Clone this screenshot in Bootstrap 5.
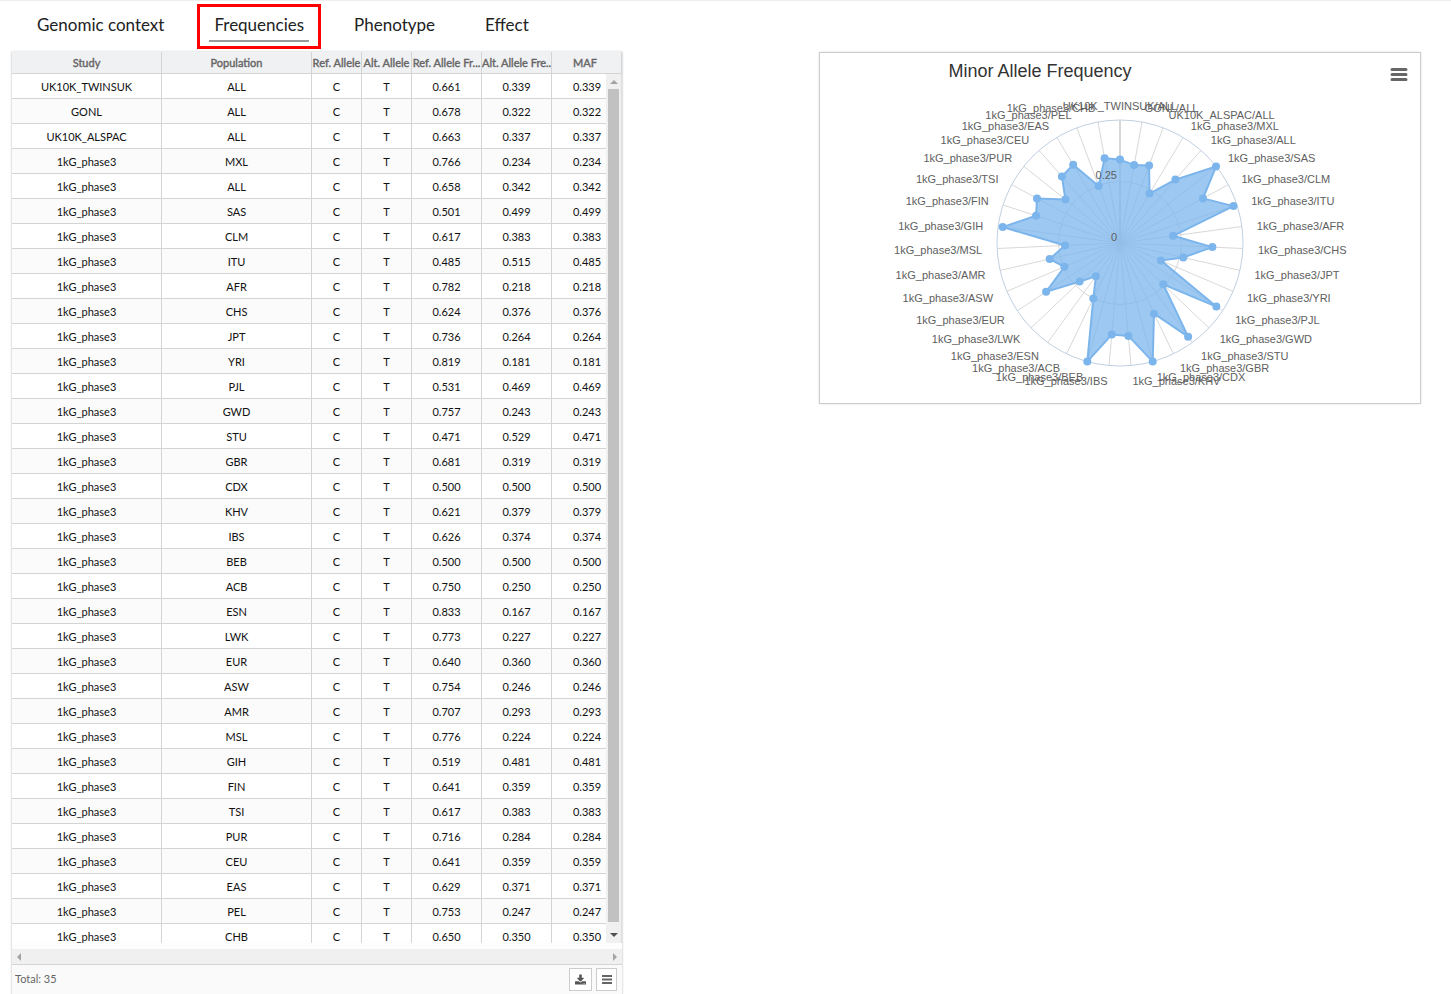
<!DOCTYPE html>
<html lang="en">
<head>
<meta charset="utf-8">
<meta name="viewport" content="width=device-width, initial-scale=1">
<title>Variant frequencies</title>
<link href="https://cdn.jsdelivr.net/npm/bootstrap@5.3.0/dist/css/bootstrap.min.css" rel="stylesheet">
<style>
  body { font-family: Lato, sans-serif; color: #222; background: #fff; }
  .page { border-top: 1px solid #eee; }
  .tab-bar { padding: 3px 0 2px 20px; gap: 16px; }
  .tab-item { border: 3px solid transparent; }
  .tab-item.active { border-color: #f00; }
  .tab-item a { display: block; margin: 0 9px 4px; padding: 4px 5px 2px; font-size: 17px; line-height: 27px; color: #222; text-decoration: none; border-bottom: 2px solid transparent; }
  .tab-item.active a { border-color: #999; }
  .panels { padding: 0 30px 0 11px; gap: 24px; min-height: 0; }
  .grid-box { flex: 0 1 612px; background: #fdfdfd; border: 1px solid #e6e6e6; border-top-color: #eee; border-bottom: 0; border-radius: 2px 2px 0 0; box-shadow: 0 0 2px #e4e4e4; overflow: hidden; }
  .grid-table { table-layout: fixed; width: 100%; border-collapse: separate; border-spacing: 0; text-align: center; white-space: nowrap; }
  .grid-table .c-name { width: 150px; }
  .grid-table .c-allele { width: 50px; }
  .grid-table .c-freq { width: 70px; }
  .grid-table th { height: 22px; padding: 0; font-size: 11px; line-height: 21px; font-weight: 400; -webkit-text-stroke: .4px #666; color: #666; background: #f0f1f3; border-right: 1px solid #d4d4d4; border-bottom: 1px solid #d4d4d4; overflow: hidden; }
  .grid-table td { height: 25px; padding: 2px 0 0; font-size: 11px; line-height: 22px; color: #111; background: #fff; border-right: 1px solid #d4d4d4; border-bottom: 1px solid #d4d4d4; }
  .grid-table tr:nth-child(even) td { background: #fbfbfb; }
  .grid-table td:last-child { border-right: 0; }
  .grid-table th:last-child { padding-right: 3px; }
  .v-bar { width: 16px; top: 22px; bottom: 0; right: 0; background: #f0f0f0; border-right: 1px solid #ddd; }
  .v-bar .thumb { flex: 1; width: 11px; background: #c1c1c1; }
  .v-bar svg { height: 15px; width: 14px; }
  .v-bar svg:last-child { height: 21px; }
  .h-bar { height: 16px; margin-top: 6px; background: #f0f0f0; border-bottom: 1px solid #d4d4d4; }
  .grid-foot { height: 29px; padding: 0 5px 0 3px; background: #fafafa; color: #666; font-size: 11px; gap: 4px; }
  .tool { width: 23px; height: 23px; padding: 0; background: #fff; border: 1px solid #ccc; color: #555; display: flex; align-items: center; justify-content: center; }
  .tool + .tool { width: 21px; }
  .chart-box { flex: 0 1 602px; margin-top: 1px; border: 1px solid #ccc; box-shadow: 0 0 2px #ddd; background: #fff; }
  .chart-box svg.plot { display: block; width: 100%; font-family: "Liberation Sans", Arial, sans-serif; font-size: 11px; fill: #606060; }
  .menu-btn { position: absolute; top: 10px; right: 9px; width: 24px; height: 22px; padding: 0; border: 0; background: none; }
  .menu-btn svg { display: block; }
</style>
</head>
<body>
<div class="page vh-100 d-flex flex-column overflow-hidden">
  <nav class="tab-bar d-flex" aria-label="Variant sections">
    <div class="tab-item"><a href="#context">Genomic context</a></div>
    <div class="tab-item active"><a href="#frequencies" aria-current="page">Frequencies</a></div>
    <div class="tab-item"><a href="#phenotype">Phenotype</a></div>
    <div class="tab-item"><a href="#effect">Effect</a></div>
  </nav>
  <main class="panels d-flex justify-content-between align-items-start flex-grow-1">
    <section class="grid-box d-flex flex-column h-100">
      <div class="position-relative flex-grow-1 overflow-hidden">
        <table class="grid-table">
          <colgroup><col class="c-name"><col class="c-name"><col class="c-allele"><col class="c-allele"><col class="c-freq"><col class="c-freq"><col></colgroup>
          <thead><tr><th>Study</th><th>Population</th><th>Ref. Allele</th><th>Alt. Allele</th><th>Ref. Allele Fr...</th><th>Alt. Allele Fre..</th><th>MAF</th></tr></thead>
          <tbody id="rows"></tbody>
        </table>
        <div class="v-bar position-absolute d-flex flex-column align-items-center" aria-hidden="true">
          <svg viewBox="0 0 14 15"><path d="M3 10L7 6l4 4z" fill="#a3a3a3"/></svg>
          <div class="thumb"></div>
          <svg viewBox="0 0 14 21"><path d="M3 11h8l-4 4z" fill="#505050"/></svg>
        </div>
      </div>
      <div class="h-bar d-flex justify-content-between align-items-center px-1" aria-hidden="true">
        <svg width="6" height="8"><path d="M5 0v8L1 4z" fill="#a3a3a3"/></svg>
        <svg width="6" height="8"><path d="M1 0v8l4-4z" fill="#a3a3a3"/></svg>
      </div>
      <div class="grid-foot d-flex align-items-center">
        <span class="me-auto">Total: 35</span>
        <button class="tool" type="button" aria-label="Download"><svg width="11" height="11" viewBox="0 0 1664 1536" fill="currentColor"><path d="M1280 1344q0-26-19-45t-45-19-45 19-19 45 19 45 45 19 45-19 19-45zm256 0q0-26-19-45t-45-19-45 19-19 45 19 45 45 19 45-19 19-45zm128-224v320q0 40-28 68t-68 28H96q-40 0-68-28t-28-68v-320q0-40 28-68t68-28h465l135 136q58 56 136 56t136-56l136-136h464q40 0 68 28t28 68zm-325-569q17 41-14 70l-448 448q-18 19-45 19t-45-19L339 621q-31-29-14-70 17-39 59-39h256V64q0-26 19-45t45-19h256q26 0 45 19t19 45v448h256q42 0 59 39z"/></svg></button>
        <button class="tool" type="button" aria-label="Columns"><svg width="10" height="9" fill="#666"><path d="M0 0h10v2H0zM0 3.500h10v2H0zM0 7h10v2H0z"/></svg></button>
      </div>
    </section>
    <section class="chart-box position-relative">
      <svg class="plot" id="plot" viewBox="0 0 600 350" role="img" aria-label="Minor Allele Frequency"></svg>
      <button class="menu-btn" type="button" aria-label="Chart menu"><svg width="24" height="22" stroke="#666" stroke-width="3" stroke-linecap="round"><path d="M5 6.500h14M5 11.500h14M5 16.500h14"/></svg></button>
    </section>
  </main>
</div>
<script src="https://cdn.jsdelivr.net/npm/bootstrap@5.3.0/dist/js/bootstrap.bundle.min.js"></script>
<script>
  // Reference allele frequency per study and population
  const phase3 = 'MXL .766,ALL .658,SAS .501,CLM .617,ITU .485,AFR .782,CHS .624,JPT .736,YRI .819,PJL .531,GWD .757,STU .471,GBR .681,CDX .500,KHV .621,IBS .626,BEB .500,ACB .750,ESN .833,LWK .773,EUR .640,ASW .754,AMR .707,MSL .776,GIH .519,FIN .641,TSI .617,PUR .716,CEU .641,EAS .629,PEL .753,CHB .650';
  const data = [['UK10K_TWINSUK', 'ALL', .661], ['GONL', 'ALL', .678], ['UK10K_ALSPAC', 'ALL', .663]]
    .concat(phase3.split(',').map(s => { const [p, f] = s.split(' '); return ['1kG_phase3', p, +f]; }));
  document.getElementById('rows').innerHTML = data.map(([s, p, f]) =>
    `<tr><td>${s}</td><td>${p}</td><td>C</td><td>T</td><td>${f.toFixed(3)}</td><td>${(1 - f).toFixed(3)}</td><td>${Math.min(f, 1 - f).toFixed(3)}</td></tr>`).join('');

  // Radar chart: 0 at the centre, 0.5 on the outer ring
  const cx = 300, cy = 190, R = 123;
  const at = (i, r) => { const a = i * 2 * Math.PI / data.length; return [(cx + r * Math.sin(a)).toFixed(1), (cy - r * Math.cos(a)).toFixed(1)]; };
  const pts = data.map(([, , f], i) => at(i, Math.min(f, 1 - f) / 0.5 * R));
  let out = `<text x="220" y="24" text-anchor="middle" font-size="18" fill="#333">Minor Allele Frequency</text>`;
  out += data.map((d, i) => { const [x, y] = at(i, R); return `<path d="M${cx} ${cy}L${x} ${y}" stroke="#d8d8d8"/>`; }).join('');
  out += `<circle cx="${cx}" cy="${cy}" r="${R / 2}" fill="none" stroke="#d8d8d8"/><circle cx="${cx}" cy="${cy}" r="${R}" fill="none" stroke="#c0d0e0"/>`;
  out += `<path d="M${cx} ${cy}V${cy - R}" stroke="#d8d8d8" stroke-width="2"/>`;
  out += `<polygon points="${pts.join(' ')}" fill="#7cb5ec" fill-opacity=".75"/><polygon points="${pts.join(' ')}" fill="none" stroke="#7cb5ec" stroke-width="2" stroke-linejoin="round"/>`;
  out += pts.map(([x, y]) => `<circle cx="${x}" cy="${y}" r="4" fill="#7cb5ec"/>`).join('');
  out += data.map(([s, p], i) => {
    const [x, y] = at(i, R + 15);
    const anchor = i === 0 ? 'middle' : i <= data.length / 2 ? 'start' : 'end';
    return `<text x="${x}" y="${Math.round(+y + 5)}" text-anchor="${anchor}">${s}/${p}</text>`;
  }).join('');
  out += `<text x="297" y="126" text-anchor="end">0.25</text><text x="297" y="188" text-anchor="end">0</text>`;
  document.getElementById('plot').innerHTML = out;
</script>
</body>
</html>
